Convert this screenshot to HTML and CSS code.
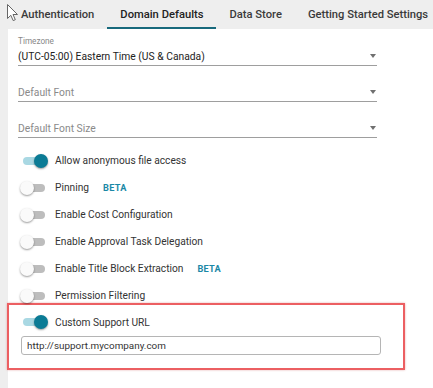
FILE: index.html
```html
<!DOCTYPE html>
<html lang="en">
<head>
    <meta charset="UTF-8">
    <meta name="viewport" content="width=device-width, initial-scale=1.0">
    <title>Domain Defaults</title>
    <link rel="stylesheet" href="styles.css">
</head>
<body>
    <svg class="cursor" width="13" height="19" viewBox="0 0 13 19">
        <path d="M1.5 1.5 L1.5 15.5 L4.8 12.3 L7.2 17.6 L9.3 16.7 L7 11.5 L11.5 11.5 Z" fill="#fff" stroke="#666" stroke-width="1"/>
    </svg>

    <div class="tabs">
        <div class="tab">Authentication</div>
        <div class="tab active">Domain Defaults</div>
        <div class="tab">Data Store</div>
        <div class="tab">Getting Started Settings</div>
    </div>

    <div class="panel">
        <div class="field">
            <div class="field-label">Timezone</div>
            <div class="select">
                <span>(UTC-05:00) Eastern Time (US &amp; Canada)</span>
                <span class="caret"></span>
            </div>
        </div>
        <div class="field">
            <div class="select empty">
                <span>Default Font</span>
                <span class="caret"></span>
            </div>
        </div>
        <div class="field">
            <div class="select empty">
                <span>Default Font Size</span>
                <span class="caret"></span>
            </div>
        </div>

        <div class="toggles">
            <div class="toggle-row">
                <span class="switch on"><span class="track"></span><span class="knob"></span></span>
                <span class="toggle-label">Allow anonymous file access</span>
            </div>
            <div class="toggle-row">
                <span class="switch"><span class="track"></span><span class="knob"></span></span>
                <span class="toggle-label">Pinning</span>
                <span class="beta">BETA</span>
            </div>
            <div class="toggle-row">
                <span class="switch"><span class="track"></span><span class="knob"></span></span>
                <span class="toggle-label">Enable Cost Configuration</span>
            </div>
            <div class="toggle-row">
                <span class="switch"><span class="track"></span><span class="knob"></span></span>
                <span class="toggle-label">Enable Approval Task Delegation</span>
            </div>
            <div class="toggle-row">
                <span class="switch"><span class="track"></span><span class="knob"></span></span>
                <span class="toggle-label">Enable Title Block Extraction</span>
                <span class="beta">BETA</span>
            </div>
            <div class="toggle-row">
                <span class="switch"><span class="track"></span><span class="knob"></span></span>
                <span class="toggle-label">Permission Filtering</span>
            </div>
        </div>

        <div class="highlight">
            <div class="toggle-row short">
                <span class="switch on"><span class="track"></span><span class="knob"></span></span>
                <span class="toggle-label">Custom Support URL</span>
            </div>
            <input class="url-input" type="text" value="http://support.mycompany.com">
        </div>
    </div>
</body>
</html>
```

FILE: styles.css
```css
body {
    margin: 0;
    background: #eeeeee;
    font-family: Roboto, "Liberation Sans", sans-serif;
    color: #333;
    height: 388px;
    overflow: hidden;
}
.cursor {
    position: absolute;
    left: 6px;
    top: 3px;
}
.tabs {
    display: flex;
    height: 29px;
    padding-left: 8px;
}
.tab {
    box-sizing: border-box;
    height: 29px;
    padding: 3px 13px 0;
    line-height: 24px;
    font-size: 11.2px;
    font-weight: 500;
    color: #3a3a3a;
    white-space: nowrap;
}
.tab.active {
    color: #222;
    border-bottom: 2px solid #17697c;
}
.panel {
    margin-left: 8px;
    background: #fff;
    padding: 7px 0 0 10px;
    height: 352px;
}
.field {
    width: 359px;
    margin-top: 16px;
}
.field:first-child {
    margin-top: 0;
}
.field-label {
    font-size: 8.2px;
    color: #888;
    height: 10px;
    line-height: 10px;
}
.select {
    display: flex;
    align-items: center;
    justify-content: space-between;
    box-sizing: border-box;
    height: 20px;
    padding-top: 2px;
    border-bottom: 1px solid #9e9e9e;
    font-size: 10.3px;
    color: #222;
}
.select.empty {
    color: #8a8a8a;
}
.caret {
    width: 0;
    height: 0;
    border-left: 3px solid transparent;
    border-right: 3px solid transparent;
    border-top: 4px solid #707070;
    margin-right: 1px;
    margin-bottom: 2px;
}
.toggles {
    margin-top: 9px;
}
.toggle-row {
    display: flex;
    align-items: center;
    height: 27px;
    padding-left: 2px;
}
.toggle-row.short {
    height: 18px;
    padding-left: 11px;
}
.switch {
    position: relative;
    width: 28px;
    height: 14px;
    flex: none;
}
.track {
    position: absolute;
    left: 3px;
    top: 3px;
    width: 22px;
    height: 8px;
    border-radius: 4px;
    background: #bdbdbd;
}
.knob {
    position: absolute;
    left: 0;
    top: 0;
    width: 14px;
    height: 14px;
    border-radius: 50%;
    background: #fafafa;
    box-shadow: 0 1px 2px rgba(0, 0, 0, 0.4);
}
.switch.on .track {
    background: #a9d8e3;
}
.switch.on .knob {
    left: 14px;
    background: #0b7b95;
}
.toggle-label {
    margin-left: 7px;
    font-size: 10.2px;
    color: #333;
}
.beta {
    margin-left: 14px;
    font-size: 9.2px;
    font-weight: 700;
    color: #1b88a6;
    letter-spacing: 0.3px;
}
.highlight {
    margin: -6px 0 0 -11px;
    width: 394px;
    border: 2px solid #ec5f62;
    box-shadow: 0 0 2px rgba(200, 60, 60, 0.4);
    padding-top: 8px;
    height: 55px;
}
.url-input {
    display: block;
    margin: 5px 0 0 12px;
    width: 360px;
    height: 19px;
    box-sizing: border-box;
    border: 1px solid #b5b5b5;
    border-radius: 3px;
    padding: 0 5px;
    font-family: Roboto, "Liberation Sans", sans-serif;
    font-size: 9.9px;
    color: #333;
    outline: none;
}
```
